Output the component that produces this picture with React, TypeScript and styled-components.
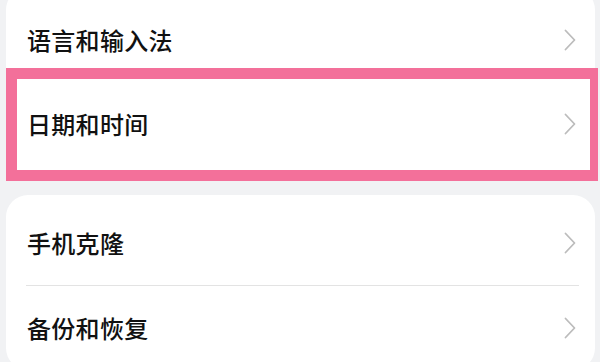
import React from 'react';
import styled, { createGlobalStyle, css } from 'styled-components';

const PINK = '#f3709a';
const PAGE_BG = '#f1f2f4';

const GlobalStyle = createGlobalStyle`
  html, body {
    margin: 0;
    padding: 0;
    background: ${PAGE_BG};
    overflow: hidden;
  }
  body {
    font-family: "Noto Sans CJK SC", "Noto Sans", sans-serif;
  }
`;

const Page = styled.div`
  width: 600px;
  height: 362px;
  background: ${PAGE_BG};
  display: flex;
  flex-direction: column;
  gap: 14px;
  overflow: hidden;
`;

const Card = styled.div<{ $top?: boolean }>`
  margin: 0 5px 0 6px;
  background: #ffffff;
  border-radius: 22px;
  display: flex;
  flex-direction: column;
  ${(p) =>
    p.$top
      ? css`
          margin-top: -12px;
          padding: 10px 0 15px;
        `
      : css`
          padding: 6px 0 0;
        `}
`;

const Row = styled.div<{ $highlighted?: boolean }>`
  position: relative;
  height: 84px;
  padding: 0 19px 0 21px;
  display: flex;
  align-items: center;
  justify-content: space-between;

  ${(p) =>
    p.$highlighted &&
    css`
      &::after {
        content: '';
        position: absolute;
        top: -14px;
        bottom: -15px;
        left: 0;
        right: -3px;
        border: 11px solid ${PINK};
        border-right-width: 8px;
        pointer-events: none;
      }
    `}
`;

const Label = styled.span`
  font-size: 24px;
  font-weight: 500;
  line-height: 1;
  color: #111111;
  letter-spacing: 0.3px;
`;

const Divider = styled.div`
  height: 1px;
  margin: 0 16px 0 20px;
  background: #e3e3e3;
`;

const Chevron = () => (
  <svg width="12" height="22" viewBox="0 0 12 22" fill="none">
    <path
      d="M1.5 1.5 L10.5 11 L1.5 20.5"
      stroke="#bcbcbc"
      strokeWidth="1.8"
      strokeLinecap="round"
      strokeLinejoin="round"
    />
  </svg>
);

const Item: React.FC<{ label: string; highlighted?: boolean }> = ({ label, highlighted }) => (
  <Row $highlighted={highlighted}>
    <Label>{label}</Label>
    <Chevron />
  </Row>
);

export default function App() {
  return (
    <>
      <GlobalStyle />
      <Page>
        <Card $top>
          <Item label="语言和输入法" />
          <Item label="日期和时间" highlighted />
        </Card>
        <Card>
          <Item label="手机克隆" />
          <Divider />
          <Item label="备份和恢复" />
        </Card>
      </Page>
    </>
  );
}
